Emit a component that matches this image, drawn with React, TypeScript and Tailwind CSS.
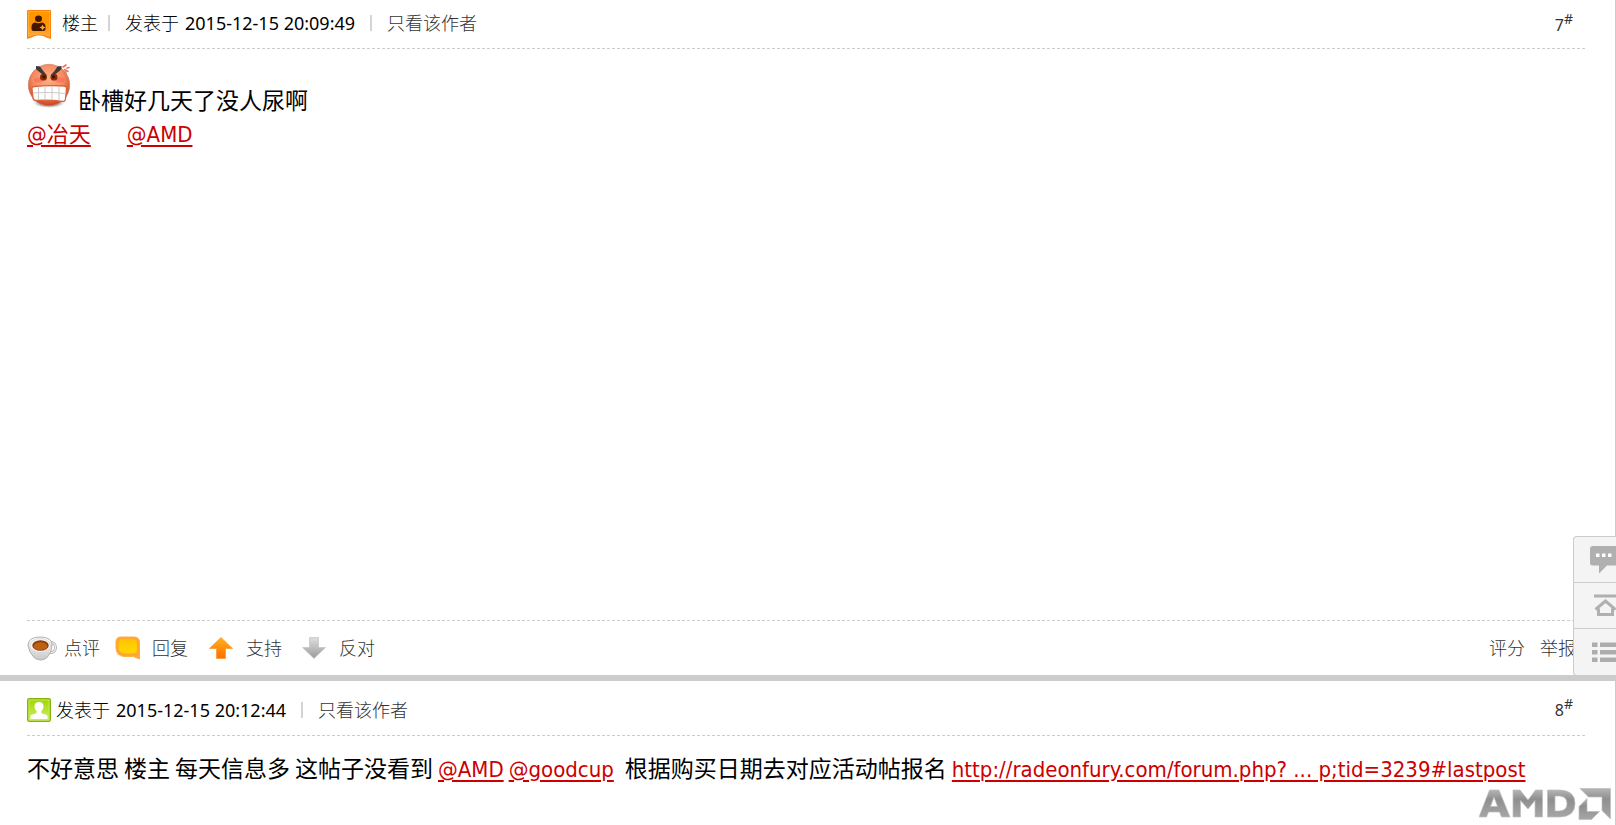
import type { ReactNode } from "react";

function AuthorIcon() {
  return (
    <svg width="24" height="29" viewBox="0 0 24 29" aria-hidden="true">
      <defs>
        <linearGradient id="author" x1="0" y1="0" x2="0" y2="1">
          <stop offset="0" stopColor="#ff9a00" />
          <stop offset="0.5" stopColor="#ff9200" />
          <stop offset="1" stopColor="#ffa83c" />
        </linearGradient>
      </defs>
      <path d="M0 1Q0 0 1 0H23Q24 0 24 1V29L19.500 27.500Q16 25 12 25.500Q8 25 4.500 27.500L0 29Z" fill="#ff7f0a" />
      <path d="M1.500 1.500H22.500V26.500Q17 23.500 12 24Q7 23.500 1.500 26.500Z" fill="url(#author)" stroke="#ffb545" strokeWidth="0.800" />
      <ellipse cx="11.500" cy="8.800" rx="3.500" ry="3.300" fill="#431600" />
      <path d="M4.500 17Q4.500 13 8 12.500Q11.500 14 15 12.500Q18.500 13 18.500 17V19Q18.500 21 16.500 21H6.500Q4.500 21 4.500 19Z" fill="#431600" />
      <path d="M15.500 14.500L16.500 16.500L18.700 17.500L16.500 18.500L15.500 20.500L14.500 18.500L12.300 17.500L14.500 16.500Z" fill="#ffa51f" />
    </svg>
  );
}

function MemberIcon() {
  return (
    <svg width="24" height="24" viewBox="0 0 24 24" aria-hidden="true">
      <defs>
        <linearGradient id="member" x1="0" y1="0" x2="0" y2="1">
          <stop offset="0" stopColor="#9fd400" />
          <stop offset="1" stopColor="#d0f26a" />
        </linearGradient>
      </defs>
      <rect x="0.750" y="0.750" width="22.500" height="22.500" rx="1.500" fill="url(#member)" stroke="#83b40c" strokeWidth="1.500" />
      <rect x="2" y="2" width="20" height="20" fill="none" stroke="#c4ea55" strokeWidth="1" />
      <path d="M12 4C9 4 7.300 6 7.500 8.800C7.600 10.500 8.300 12 9.500 13V15C8 16.200 4.500 16 3.500 18V21H20.500V18C19.500 16 16 16.200 14.500 15V13C15.700 12 16.400 10.500 16.500 8.800C16.700 6 15 4 12 4Z" fill="#fff" />
    </svg>
  );
}

function AngryFace() {
  return (
    <svg width="45" height="45" viewBox="0 0 45 45" role="img" aria-label="怒" className="shrink-0">
      <defs>
        <radialGradient id="face" cx="0.480" cy="0.350" r="0.620">
          <stop offset="0" stopColor="#ffb08a" />
          <stop offset="0.600" stopColor="#f58a60" />
          <stop offset="1" stopColor="#cf4b25" />
        </radialGradient>
        <radialGradient id="shade">
          <stop offset="0.600" stopColor="#777" stopOpacity="0.700" />
          <stop offset="1" stopColor="#999" stopOpacity="0" />
        </radialGradient>
      </defs>
      <ellipse cx="22" cy="39.500" rx="16" ry="5.500" fill="url(#shade)" />
      <circle cx="22" cy="22" r="20.700" fill="url(#face)" stroke="#c8775c" strokeWidth="0.600" />
      <ellipse cx="11.500" cy="17" rx="4.500" ry="2.500" fill="#ff5b57" opacity="0.500" />
      <ellipse cx="33" cy="17" rx="4.500" ry="2.500" fill="#ff5b57" opacity="0.500" />
      <ellipse cx="16.500" cy="14.200" rx="3.500" ry="3.400" fill="#8b2d05" />
      <ellipse cx="27" cy="14.200" rx="3.500" ry="3.400" fill="#8b2d05" />
      <circle cx="17" cy="13.800" r="1.600" fill="#3a1200" />
      <circle cx="26.500" cy="13.800" r="1.600" fill="#3a1200" />
      <path d="M9 3L13 3.500Q16 8 20 12.500Q14 11.500 9 6Z" fill="#3d3838" />
      <path d="M34.500 3L30.500 3.500Q28 8 23.500 12.500Q29.500 11.500 34.500 6Z" fill="#3d3838" />
      <path d="M36 4L39 2M37.500 6.500L41 8.500M40 5L42 4.500M38.500 9L39 11" stroke="#ed7058" strokeWidth="1.600" fill="none" strokeLinecap="round" />
      <path d="M5 26Q4.800 23.500 7.500 23.500Q22 22 37 23Q39.500 23 39.500 25.500L38.500 36Q38 38.800 35.500 38.300Q22 36.500 9 37.500Q6.500 37.500 6 35Z" fill="#fff" stroke="#dc6038" strokeWidth="1.300" />
      <path d="M5.800 30Q22 28.800 39 30.500M11.500 23.500V37M18 23V37M25 23V37M32 23V37.500" stroke="#cfcaca" strokeWidth="1.100" fill="none" />
    </svg>
  );
}

function CupIcon() {
  return (
    <svg width="30" height="25" viewBox="0 0 30 25" aria-hidden="true">
      <defs>
        <linearGradient id="cup" x1="0" y1="0" x2="0" y2="1">
          <stop offset="0" stopColor="#fff" />
          <stop offset="1" stopColor="#c8c8c8" />
        </linearGradient>
      </defs>
      <ellipse cx="24" cy="11.500" rx="4.500" ry="5" fill="none" stroke="#aaa" strokeWidth="2.800" />
      <ellipse cx="24" cy="11.500" rx="4.500" ry="5" fill="none" stroke="#f0f0f0" strokeWidth="1.400" />
      <path d="M1 9Q1.500 1 13 1Q25 1 25 9Q24.500 17 19.500 22Q14 26 7.500 22Q1.500 16 1 9Z" fill="url(#cup)" stroke="#b0b0b0" strokeWidth="1" />
      <ellipse cx="13" cy="9.500" rx="10.300" ry="7" fill="#f3f3f3" stroke="#ccc" strokeWidth="0.600" />
      <ellipse cx="13.500" cy="9.500" rx="8.200" ry="5.200" fill="#913d08" />
      <ellipse cx="13.500" cy="10.200" rx="6.800" ry="3.900" fill="#bd6018" />
    </svg>
  );
}

function BubbleIcon() {
  return (
    <svg width="26" height="24" viewBox="0 0 26 24" aria-hidden="true">
      <defs>
        <linearGradient id="bubble" x1="0" y1="0" x2="0" y2="1">
          <stop offset="0" stopColor="#ffc400" />
          <stop offset="1" stopColor="#ffd800" />
        </linearGradient>
      </defs>
      <path d="M6 1H19Q24.500 1 24.500 6.500V23L18.500 20.500H9Q1 19.500 1 12V6Q1 1 6 1Z" fill="#ffa62e" stroke="#ffad45" />
      <path d="M8 3H17.500Q22 3 22 7.500V13.500Q22 17.500 17.500 17.500H10.500Q3.500 17 3.500 11V7.500Q3.500 3 8 3Z" fill="url(#bubble)" />
    </svg>
  );
}

function UpIcon() {
  return (
    <svg width="24" height="22" viewBox="0 0 24 22" aria-hidden="true">
      <defs>
        <linearGradient id="up" x1="0" y1="0" x2="0" y2="1">
          <stop offset="0" stopColor="#ffb21c" />
          <stop offset="1" stopColor="#ff6d00" />
        </linearGradient>
      </defs>
      <path d="M12 0.500L23.500 11.500H16.500V21.500H7.500V11.500H0.500Z" fill="url(#up)" stroke="#ff9a35" strokeWidth="0.800" />
    </svg>
  );
}

function DownIcon() {
  return (
    <svg width="24" height="22" viewBox="0 0 24 22" aria-hidden="true">
      <defs>
        <linearGradient id="down" x1="0" y1="0" x2="0" y2="1">
          <stop offset="0" stopColor="#dedede" />
          <stop offset="1" stopColor="#9a9a9a" />
        </linearGradient>
      </defs>
      <path d="M12 21.500L23.500 10.500H16.500V0.500H7.500V10.500H0.500Z" fill="url(#down)" stroke="#c8c8c8" strokeWidth="0.800" />
    </svg>
  );
}

function AmdLogo() {
  return (
    <svg width="132" height="32" viewBox="0 0 132 32" role="img" aria-label="AMD">
      <defs>
        <linearGradient id="metal" x1="0" y1="0" x2="0" y2="1">
          <stop offset="0" stopColor="#b4b4b4" />
          <stop offset="0.350" stopColor="#8f8f8f" />
          <stop offset="1" stopColor="#a6a6a6" />
        </linearGradient>
      </defs>
      <g fill="url(#metal)" stroke="#bdbdbd" strokeWidth="0.700" fillRule="evenodd">
        <path d="M10.500 2H20L31 29H22.500L20.500 24H9.500L7.500 29H0L10.500 2ZM15 9L11.500 18.500H18.500Z" />
        <path d="M34 2H41L49 12L56.500 2H63.500V29H56V12.500L49 21L41.500 12.500V29H34Z" />
        <path d="M68.500 2H81Q96 2.500 96 15.500Q96 28.500 81 29H68.500ZM76 8V23H80.500Q88 22.500 88 15.500Q88 8.500 80.500 8Z" />
        <path d="M101 0.500H131.500V31L123 22.500V9H109.500Z" />
        <path d="M108 10.500V23.500H120.500L112.500 31.500H100V18.500Z" />
      </g>
    </svg>
  );
}

function ChatIcon() {
  return (
    <svg width="29" height="28" viewBox="0 0 29 28" className="shrink-0" aria-hidden="true">
      <path d="M3 0H26Q29 0 29 3V17Q29 19.500 26 19.500H17L9 27.500V19.500H3Q0 19.500 0 17V3Q0 0 3 0Z" fill="#b0b0b0" />
      <path d="M6 7.500H9.500V11H6ZM12 7.500H15.500V11H12ZM18 7.500H21.500V11H18Z" fill="#fff" />
    </svg>
  );
}

function TopIcon() {
  return (
    <svg width="24" height="23" viewBox="0 0 24 23" fill="none" stroke="#b0b0b0" className="shrink-0" aria-hidden="true">
      <path d="M0 2H24" strokeWidth="3" />
      <path d="M1.500 15.500L11.500 7L21.500 15.500M4.500 14.500V20.500H18.500V14.500" strokeWidth="3" />
    </svg>
  );
}

function ListIcon() {
  return (
    <svg width="28" height="21" viewBox="0 0 28 21" fill="#adadad" className="shrink-0" aria-hidden="true">
      <path d="M0 0.500H5.500V5H0ZM8 0.500H28V5H8ZM0 8H5.500V12.500H0ZM8 8H28V12.500H8ZM0 15.500H5.500V20H0ZM8 15.500H28V20H8Z" />
    </svg>
  );
}

function Separator() {
  return <span className="mx-[15px] h-4 w-[2px] bg-[#d4d4d4]" />;
}

function Mention({ children }: { children: ReactNode }) {
  return (
    <a
      href="#"
      className="font-['DejaVu_Sans_Condensed','Noto_Sans_CJK_SC',sans-serif] text-[22px] text-[#c00] underline decoration-2 underline-offset-3"
    >
      {children}
    </a>
  );
}

function Floor({ number }: { number: number }) {
  return (
    <a href="#" className="mr-3 flex items-start pt-px text-[#333]">
      <span className="text-base leading-6">{number}</span>
      <sup className="top-0 text-sm leading-3">#</sup>
    </a>
  );
}

function Action({ icon, children }: { icon: ReactNode; children: string }) {
  return (
    <button type="button" className="flex items-center whitespace-nowrap">
      <span className="flex w-[37px] items-center">{icon}</span>
      {children}
    </button>
  );
}

export default function App() {
  return (
    <div className="relative overflow-hidden font-['Noto_Sans','Noto_Sans_CJK_SC',sans-serif]">
      <main className="min-h-screen border-r border-[#ccc] bg-white text-lg text-black">
        <article className="flex flex-col pl-[27px] pr-[30px]">
          <header className="flex h-[49px] items-center justify-between border-b border-dashed border-[#ccc]">
            <div className="flex items-start whitespace-nowrap leading-[26px]">
              <AuthorIcon />
              <span className="ml-[11px] font-light">楼主</span>
              <span className="ml-[-5px] flex h-[26px] items-center"><Separator /></span>
              <span className="font-light">发表于</span>
              <time className="ml-[6px]">2015-12-15 20:09:49</time>
              <span className="flex h-[26px] items-center"><Separator /></span>
              <a href="#" className="font-light text-[#333]">只看该作者</a>
            </div>
            <Floor number={7} />
          </header>
          <div className="min-h-[571px] pt-[14px] text-[23px] leading-[34px]">
            <div className="flex h-[55px] items-start gap-[6px]">
              <AngryFace />
              <p className="pt-5">卧槽好几天了没人尿啊</p>
            </div>
            <p className="flex gap-9">
              <Mention>@冶天</Mention>
              <Mention>@AMD</Mention>
            </p>
          </div>
          <footer className="flex h-[55px] items-center justify-between border-t border-dashed border-[#ccc] font-light text-[#333]">
            <div className="flex items-center gap-[15px]">
              <Action icon={<CupIcon />}>点评</Action>
              <Action icon={<BubbleIcon />}>回复</Action>
              <span className="flex gap-5 pl-[6px]">
                <Action icon={<UpIcon />}>支持</Action>
                <Action icon={<DownIcon />}>反对</Action>
              </span>
            </div>
            <div className="mr-[9px] flex gap-[15px] whitespace-nowrap">
              <button type="button">评分</button>
              <button type="button">举报</button>
            </div>
          </footer>
        </article>
        <div className="h-[6px] bg-[#ccc]" />
        <article className="pl-[27px] pr-[30px]">
          <header className="flex h-[55px] items-center justify-between border-b border-dashed border-[#ccc] pt-[3px]">
            <div className="flex items-center whitespace-nowrap leading-6">
              <MemberIcon />
              <span className="ml-[5px] font-light">发表于</span>
              <time className="ml-[6px]">2015-12-15 20:12:44</time>
              <Separator />
              <a href="#" className="font-light text-[#333]">只看该作者</a>
            </div>
            <Floor number={8} />
          </header>
          <p className="flex flex-wrap items-baseline gap-x-[5px] pt-[15px] text-[23px] leading-[34px]">
            <span>不好意思</span>
            <span>楼主</span>
            <span>每天信息多</span>
            <span>这帖子没看到</span>
            <Mention>@AMD</Mention>
            <Mention>@goodcup</Mention>
            <span className="ml-[6px]">根据购买日期去对应活动帖报名</span>
            <Mention>http://radeonfury.com/forum.php? ... p;tid=3239#lastpost</Mention>
          </p>
        </article>
      </main>
      <div className="absolute bottom-[5px] right-[5px]">
        <AmdLogo />
      </div>
      <nav className="absolute right-0 top-[536px] w-[43px] divide-y divide-[#ccc] overflow-hidden rounded-l border border-r-0 border-[#ccc] bg-[#f4f4f4]">
        <button type="button" aria-label="回复" className="flex h-[46px] w-full items-center pl-4"><ChatIcon /></button>
        <button type="button" aria-label="返回顶部" className="flex h-[46px] w-full items-center pl-5"><TopIcon /></button>
        <button type="button" aria-label="返回列表" className="flex h-[46px] w-full items-center pl-[18px]"><ListIcon /></button>
      </nav>
    </div>
  );
}
